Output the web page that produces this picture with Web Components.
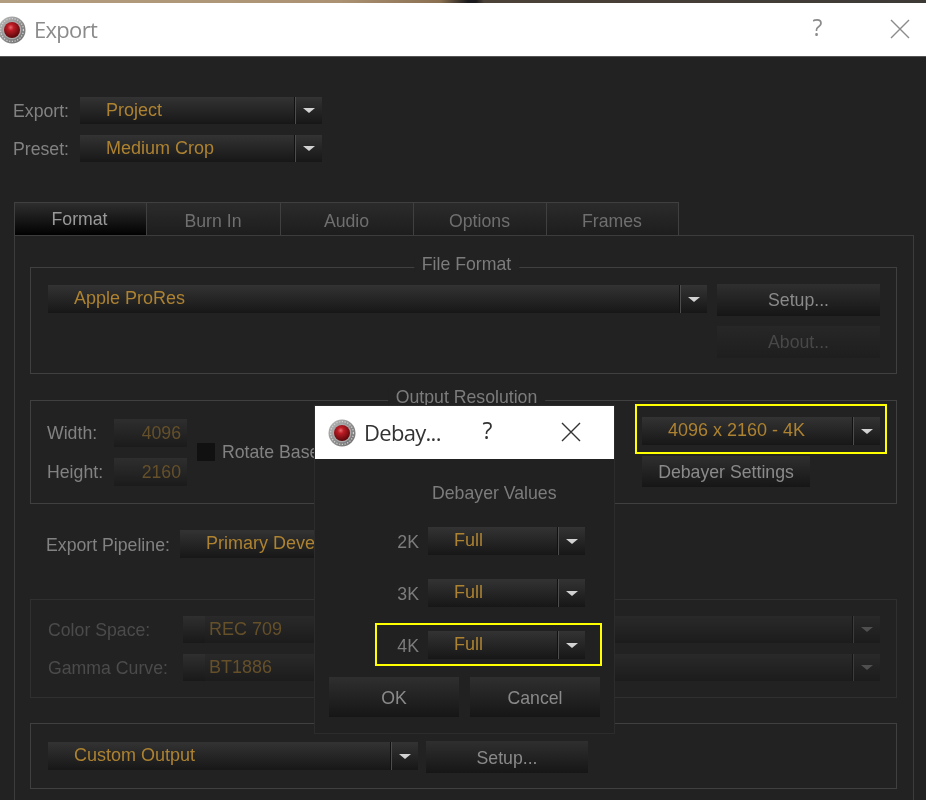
<!DOCTYPE html>
<html>
<head>
<meta charset="utf-8">
<title>Export</title>
<style>
    html, body { margin: 0; padding: 0; background: #222; }
    body { height: 800px; overflow: hidden; font: 17.7px "Liberation Sans", Arial, sans-serif; color: #8a8a8a; }
</style>
</head>
<body>

<!-- Red lens logo, same for both title bars -->
<template id="rs-logo">
    <style>
        :host { display: block; width: 28px; height: 28px; flex: none; }
        svg { display: block; width: 100%; height: 100%; }
    </style>
    <svg viewBox="0 0 28 28">
        <defs>
            <radialGradient id="lens" cx="42%" cy="34%" r="68%">
                <stop offset="0" stop-color="#e66a70"/>
                <stop offset=".28" stop-color="#bd1c24"/>
                <stop offset="1" stop-color="#55060a"/>
            </radialGradient>
            <linearGradient id="ring" x1="0" y1="0" x2="1" y2="1">
                <stop offset="0" stop-color="#bdbdbd"/>
                <stop offset=".55" stop-color="#8c8c8c"/>
                <stop offset="1" stop-color="#6a6a6a"/>
            </linearGradient>
        </defs>
        <circle cx="14" cy="14" r="13.5" fill="url(#ring)"/>
        <circle cx="14" cy="14" r="11.4" fill="none" stroke="#d4d4d4" stroke-width="1.2" stroke-dasharray="1.2 1.6"/>
        <circle cx="14" cy="14" r="9.3" fill="#a9a9a9"/>
        <circle cx="14" cy="14" r="8" fill="url(#lens)"/>
    </svg>
</template>

<template id="rs-titlebar">
    <style>
        :host { display: flex; align-items: center; background: #fff; height: 53px; box-sizing: border-box; font: 22px "Open Sans", "Noto Sans", sans-serif; letter-spacing: -.7px; color: var(--bar-text, #8b8b8b); }
        .title { flex: 1; padding: 0 0 2px var(--title-gap, 8px); line-height: 1; }
        .help { width: var(--help-w, 54px); margin-right: var(--help-gap, 30px); padding-bottom: 5px; text-align: center; font-size: 23px; line-height: 1; }
        .close { width: var(--close-w, 52px); display: flex; justify-content: center; padding-bottom: 2px; }
        svg { display: block; width: 20px; height: 20px; }
        path { stroke: var(--bar-text, #8b8b8b); stroke-width: 1.4; fill: none; }
    </style>
    <slot name="icon"></slot>
    <span class="title"><slot></slot></span>
    <span class="help">?</span>
    <span class="close"><svg viewBox="0 0 20 20"><path d="M1 1 L19 19 M19 1 L1 19"/></svg></span>
</template>

<template id="rs-select">
    <style>
        :host { display: flex; height: 28px; box-sizing: border-box; font-size: 18px; color: #ad8230; background: linear-gradient(#333, #171717); line-height: 1; }
        .lead { display: none; }
        .text { flex: 1; min-width: 0; padding: 4px 0 0 26px; white-space: nowrap; overflow: hidden; }
        .arrow { width: 27px; flex: none; display: flex; align-items: center; justify-content: center; box-shadow: inset 1px 0 #4d4d4d, -1px 0 #111; }
        .arrow i { width: 0; height: 0; border: 6px solid transparent; border-top: 5.5px solid #d2d2d2; border-bottom: 0; }
        :host([disabled]) { color: #65502a; background: linear-gradient(#292929, #1c1c1c); height: 27px; }
        :host([disabled]) .lead { display: block; width: 22px; flex: none; background: linear-gradient(#2f2f2f, #191919); }
        :host([disabled]) .text { padding-left: 4px; }
        :host([disabled]) .arrow { box-shadow: inset 1px 0 #3c3c3c, -1px 0 #161616; }
        :host([disabled]) .arrow i { border-top-color: #4f4f4f; }
    </style>
    <span class="lead"></span>
    <span class="text"><slot></slot></span>
    <span class="arrow"><i></i></span>
</template>

<template id="rs-button">
    <style>
        :host { display: flex; align-items: center; justify-content: center; height: 32px; box-sizing: border-box; padding-top: 2px; background: linear-gradient(#2f2f2f, #161616); color: #8a8a8a; line-height: 1; }
        :host([disabled]) { background: linear-gradient(#272727, #1e1e1e); color: #484848; }
    </style>
    <slot></slot>
</template>

<template id="rs-input">
    <style>
        :host { display: block; width: 73px; height: 28px; box-sizing: border-box; padding: 6px 6px 0 0; text-align: right; background: linear-gradient(#2e2e2e, #1b1b1b); color: #65502a; line-height: 1; }
    </style>
    <slot></slot>
</template>

<template id="rs-group">
    <style>
        :host { display: block; position: relative; border: 1px solid #404040; box-sizing: border-box; }
        :host([dim]) { border-color: #303030; }
        .legend { position: absolute; left: 50%; top: -14px; transform: translateX(-50%); padding: 0 8px; margin-left: 3px; background: #222; color: #7c7c7c; line-height: 20px; white-space: nowrap; }
        .legend:empty { display: none; }
    </style>
    <div class="legend"></div>
    <slot></slot>
</template>

<template id="rs-tabs">
    <style>
        :host { display: flex; height: 34px; color: #6f6f6f; line-height: 1; }
        ::slotted(rs-tab) { flex: none; }
    </style>
    <slot></slot>
</template>

<template id="rs-tab">
    <style>
        :host { display: flex; align-items: center; justify-content: center; box-sizing: border-box; height: 34px; padding: 5px 1px 0 0; border: 1px solid #404040; border-left-width: 0; background: linear-gradient(#2b2b2b, #1d1d1d); color: #6f6f6f; }
        :host([active]) { background: linear-gradient(#2e2e2e, #000); color: #9a9a9a; border-left-width: 1px; border-bottom: 0; padding: 1px 2px 0 0; }
    </style>
    <slot></slot>
</template>

<!-- yellow note box drawn round its content in the screenshot -->
<template id="rs-mark">
    <style>
        :host { display: block; position: relative; }
        .box { position: absolute; inset: var(--mark-inset); border: 2.5px solid #ffff00; pointer-events: none; }
    </style>
    <slot></slot>
    <div class="box"></div>
</template>

<template id="rs-dialog">
    <style>
        :host { display: flex; flex-direction: column; position: absolute; left: 315px; top: 406px; width: 299px; height: 327px; background: #212121; box-shadow: 0 0 0 1px #2c2c2c; }
        .bar { flex: none; }
        .body { flex: 1; padding: 24px 14px 0; }
    </style>
    <div class="bar"><slot name="bar"></slot></div>
    <div class="body"><slot></slot></div>
</template>

<template id="rs-export-window">
    <style>
        :host { display: block; position: relative; height: 800px; overflow: hidden; background: #222; filter: blur(.4px); }
        .strip { height: 3px; background: linear-gradient(90deg, #b39d80 0, #ab9273 340px, #8a7050 440px, #1b1b1d 468px, #1b1b1d 476px, #4c4238 484px, #3d3a36 100%); }
        .bar { box-shadow: 0 1px #555; position: relative; }
        .row { display: flex; align-items: center; }
        .label { color: #828282; white-space: nowrap; padding-top: 2px; }
        .top { padding: 41px 0 0 13px; }
        .top .label { width: 67px; flex: none; }
        .top rs-select { width: 242px; height: 27px; }
        .top .row + .row { margin-top: 11px; }
        rs-tabs { margin: 40px 0 0 14px; }
        .panel { margin: -1px 12px 0 14px; border: 1px solid #3c3c3c; height: 600px; padding: 31px 16px 0 15px; position: relative; }

        #file { height: 107px; padding: 16px 16px 0 17px; display: flex; gap: 10px; }
        #file > rs-select { flex: 1; margin-top: 1px; }
        .side { width: 163px; flex: none; display: flex; flex-direction: column; gap: 10px; }

        #res { height: 104px; margin-top: 26px; padding: 16px 16px 0 16px; display: flex; }
        .dims { margin-top: 2px; display: flex; flex-direction: column; gap: 11px; }
        .dims .label { width: 67px; flex: none; padding-top: 0; }
        .rotate { height: 18px; margin: 26px 0 0 10px; display: flex; align-items: center; gap: 7px; white-space: nowrap; }
        .rotate .label { padding-top: 0; }
        .check { width: 18px; height: 18px; background: #111; }
        .res-side { margin-left: auto; width: 238px; display: flex; flex-direction: column; gap: 11px; }
        .res-side rs-button { width: 168px; height: 31px; }

        .pipeline { margin-top: 26px; padding-left: 16px; }
        .pipeline .label { width: 134px; flex: none; }
        .pipeline rs-select { width: 320px; }

        #color { height: 99px; margin-top: 41px; padding: 16px 16px 0 17px; display: flex; flex-direction: column; gap: 11px; }
        #color .label { width: 135px; flex: none; color: #4b4b4b; }
        #color rs-select { flex: 1; }

        #custom { height: 66px; margin-top: 25px; padding: 17px 0 0 17px; }
        #custom .row { gap: 8px; }
        #custom rs-select { width: 370px; margin-bottom: 2px; }
        #custom rs-button { width: 162px; padding-top: 4px; }

        .dlg-title { text-align: left; margin-left: 103px; line-height: 20px; color: #7c7c7c; }
        .dlg-row { display: flex; align-items: center; gap: 9px; margin-top: 24px; }
        .dlg-row .k { width: 90px; padding-top: 2px; text-align: right; color: #7c7c7c; }
        .dlg-row rs-select { width: 157px; }
        .dlg-first { margin-top: 24px; }
        .dlg-btns { display: flex; gap: 11px; margin-top: 18px; }
        .dlg-btns rs-button { width: 130px; height: 40px; padding-top: 4px; }
    </style>

    <div class="strip"></div>
    <rs-titlebar class="bar" style="--title-gap:8px">
        <rs-logo slot="icon" style="margin-left:-2px"></rs-logo>
        Export
    </rs-titlebar>

    <div class="top">
        <div class="row"><span class="label">Export:</span><rs-select>Project</rs-select></div>
        <div class="row"><span class="label">Preset:</span><rs-select>Medium Crop</rs-select></div>
    </div>

    <rs-tabs>
        <rs-tab active style="width:133px">Format</rs-tab>
        <rs-tab style="width:134px">Burn In</rs-tab>
        <rs-tab style="width:133px">Audio</rs-tab>
        <rs-tab style="width:133px">Options</rs-tab>
        <rs-tab style="width:132px">Frames</rs-tab>
    </rs-tabs>

    <div class="panel">
        <rs-group id="file" legend="File Format">
            <rs-select>Apple ProRes</rs-select>
            <div class="side">
                <rs-button>Setup...</rs-button>
                <rs-button disabled>About...</rs-button>
            </div>
        </rs-group>

        <rs-group id="res" legend="Output Resolution">
            <div class="dims">
                <div class="row"><span class="label">Width:</span><rs-input>4096</rs-input></div>
                <div class="row"><span class="label">Height:</span><rs-input>2160</rs-input></div>
            </div>
            <div class="rotate"><span class="check"></span><span class="label">Rotate Base</span></div>
            <div class="res-side">
                <rs-mark style="--mark-inset:-13px -7px -9px -7px"><rs-select>4096 x 2160 - 4K</rs-select></rs-mark>
                <rs-button>Debayer Settings</rs-button>
            </div>
        </rs-group>

        <div class="row pipeline"><span class="label">Export Pipeline:</span><rs-select>Primary Devel</rs-select></div>

        <rs-group id="color" dim>
            <div class="row"><span class="label">Color Space:</span><rs-select disabled>REC 709</rs-select></div>
            <div class="row"><span class="label">Gamma Curve:</span><rs-select disabled>BT1886</rs-select></div>
        </rs-group>

        <rs-group id="custom">
            <div class="row"><rs-select>Custom Output</rs-select><rs-button>Setup...</rs-button></div>
        </rs-group>
    </div>

    <rs-dialog>
        <rs-titlebar slot="bar" style="--bar-text:#333;--title-gap:8px;--help-w:40px;--help-gap:21px;--close-w:86px;padding-left:13px">
            <rs-logo slot="icon"></rs-logo>
            Debay...
        </rs-titlebar>
        <div class="dlg-title">Debayer Values</div>
        <div class="dlg-row dlg-first"><span class="k">2K</span><rs-select>Full</rs-select></div>
        <div class="dlg-row"><span class="k">3K</span><rs-select>Full</rs-select></div>
        <rs-mark style="--mark-inset:-8px -2px -7px 46px"><div class="dlg-row"><span class="k">4K</span><rs-select>Full</rs-select></div></rs-mark>
        <div class="dlg-btns"><rs-button>OK</rs-button><rs-button>Cancel</rs-button></div>
    </rs-dialog>
</template>

<rs-export-window></rs-export-window>

<script>
    // Every element is the same thing: clone its template into an open shadow root
    function shadowFrom(el, id) {
        let shadow = el.attachShadow({mode: 'open'});
        shadow.appendChild(document.getElementById(id).content.cloneNode(true));
        return shadow;
    }

    class RsLogo extends HTMLElement { constructor() { super(); shadowFrom(this, 'rs-logo'); } }
    class RsTitlebar extends HTMLElement { constructor() { super(); shadowFrom(this, 'rs-titlebar'); } }
    class RsSelect extends HTMLElement { constructor() { super(); shadowFrom(this, 'rs-select'); } }
    class RsButton extends HTMLElement { constructor() { super(); shadowFrom(this, 'rs-button'); } }
    class RsInput extends HTMLElement { constructor() { super(); shadowFrom(this, 'rs-input'); } }
    class RsTabs extends HTMLElement { constructor() { super(); shadowFrom(this, 'rs-tabs'); } }
    class RsTab extends HTMLElement { constructor() { super(); shadowFrom(this, 'rs-tab'); } }
    class RsMark extends HTMLElement { constructor() { super(); shadowFrom(this, 'rs-mark'); } }
    class RsDialog extends HTMLElement { constructor() { super(); shadowFrom(this, 'rs-dialog'); } }
    class RsExportWindow extends HTMLElement { constructor() { super(); shadowFrom(this, 'rs-export-window'); } }

    class RsGroup extends HTMLElement {
        constructor() {
            super();
            this.shadow = shadowFrom(this, 'rs-group');
        }
        connectedCallback() {
            this.shadow.querySelector('.legend').textContent = this.getAttribute('legend') || '';
        }
    }

    customElements.define('rs-logo', RsLogo);
    customElements.define('rs-titlebar', RsTitlebar);
    customElements.define('rs-select', RsSelect);
    customElements.define('rs-button', RsButton);
    customElements.define('rs-input', RsInput);
    customElements.define('rs-group', RsGroup);
    customElements.define('rs-tabs', RsTabs);
    customElements.define('rs-tab', RsTab);
    customElements.define('rs-mark', RsMark);
    customElements.define('rs-dialog', RsDialog);
    customElements.define('rs-export-window', RsExportWindow);
</script>
</body>
</html>
